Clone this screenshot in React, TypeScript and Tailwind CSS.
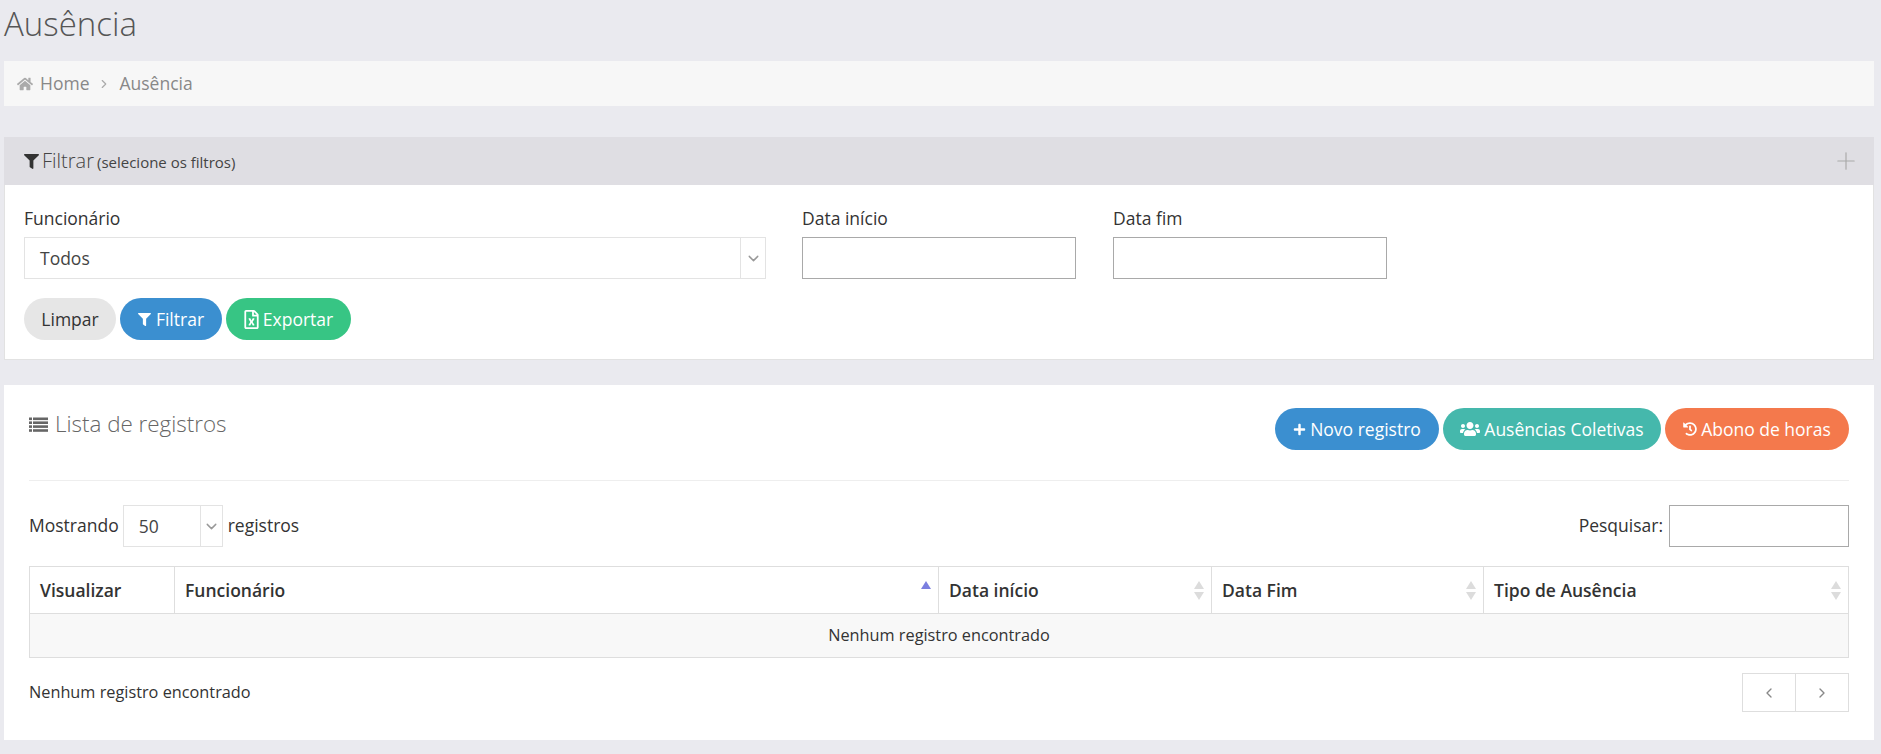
import { FaHome, FaFilter, FaPlus, FaUsers, FaHistory, FaRegFileExcel } from "react-icons/fa";
import { LuChevronDown, LuChevronLeft, LuChevronRight, LuPlus } from "react-icons/lu";

const ListIcon = () => (
  <svg className="mr-[7px]" width="19" height="15" viewBox="0 0 19 15" fill="#666">
    <rect x="0" y="0.5" width="3" height="2.6" />
    <rect x="4" y="0.5" width="15" height="2.6" />
    <rect x="0" y="4.4" width="3" height="2.6" />
    <rect x="4" y="4.4" width="15" height="2.6" />
    <rect x="0" y="8.3" width="3" height="2.6" />
    <rect x="4" y="8.3" width="15" height="2.6" />
    <rect x="0" y="12.2" width="3" height="2.6" />
    <rect x="4" y="12.2" width="15" height="2.6" />
  </svg>
);

const SortIcon = ({ active }: { active?: boolean }) => (
  <svg className="absolute right-[6px] top-[14px]" width="12" height="20" viewBox="0 0 12 20">
    <path d="M6 0 L11 8 H1 Z" fill={active ? "#7b7fe0" : "#dcdcdc"} />
    {!active && <path d="M1 11 H11 L6 19 Z" fill="#dcdcdc" />}
  </svg>
);

const Pill = ({ className, children }: { className: string; children: React.ReactNode }) => (
  <button className={`flex items-center h-[42px] rounded-[21px] text-[17.5px] ${className}`}>{children}</button>
);

const Select = ({ value, className, arrow }: { value: string; className: string; arrow: string }) => (
  <div className={`flex h-[42px] border border-[#e3e3e3] bg-white text-[17.5px] text-[#444] ${className}`}>
    <div className="flex-1 flex items-center pl-[15px]">{value}</div>
    <div className={`flex items-center justify-center border-l border-[#e3e3e3] ${arrow}`}>
      <LuChevronDown className="text-[#999] w-[17px] h-[17px]" />
    </div>
  </div>
);

const Th = ({ label, className, sort, active }: { label: string; className?: string; sort?: boolean; active?: boolean }) => (
  <th className={`relative border border-[#dedede] text-left font-semibold pl-[10px] text-[17.5px] text-[#333] ${className ?? ""}`}>
    {label}
    {sort && <SortIcon active={active} />}
  </th>
);

export default function App() {
  return (
    <div className="min-h-screen bg-[#eaeaef] px-[4px] pr-[7px] pb-[14px] font-['Open_Sans',sans-serif] text-[#333]">
      <h1 className="h-[61px] text-[33px] leading-[48px] font-light text-[#555]">Ausência</h1>

      <div className="flex items-center h-[45px] bg-[#f7f7f7] px-[13px] text-[17.5px] text-[#888]">
        <FaHome className="w-[16px] h-[16px] text-[#aaa] mr-[7px]" />
        <span>Home</span>
        <LuChevronRight className="w-[14px] h-[14px] mx-[8px] text-[#aaa]" />
        <span>Ausência</span>
      </div>

      <section className="mt-[31px] h-[223px] bg-white border border-t-0 border-[#e2e2e2]">
        <div className="flex items-center h-[48px] -mx-px bg-[#dfdee3] pl-[20px] pr-[14px] text-[#444]">
          <FaFilter className="w-[15px] h-[15px] mr-[3px] text-[#333]" />
          <span className="text-[20px] font-light">Filtrar</span>
          <span className="text-[15px] ml-[3px] mt-[2px] text-[#444]">(selecione os filtros)</span>
          <LuPlus className="ml-auto w-[28px] h-[28px] text-[#aaa]" strokeWidth={1} />
        </div>

        <div className="px-[19px] pt-[21px]">
          <div className="flex gap-[36px]">
            <div className="w-[742px]">
              <label className="block h-[31px] text-[17.5px] leading-[24px]">Funcionário</label>
              <Select value="Todos" className="w-full" arrow="w-[25px]" />
            </div>
            <div className="flex gap-[37px]">
              <div className="w-[274px]">
                <label className="block h-[31px] text-[17.5px] leading-[24px]">Data início</label>
                <input className="block w-full h-[42px] border border-[#a9a9a9] bg-white" />
              </div>
              <div className="w-[274px]">
                <label className="block h-[31px] text-[17.5px] leading-[24px]">Data fim</label>
                <input className="block w-full h-[42px] border border-[#a9a9a9] bg-white" />
              </div>
            </div>
          </div>
          <div className="flex gap-[4px] mt-[19px]">
            <Pill className="w-[92px] justify-center bg-[#e6e6e6] text-[#333]">Limpar</Pill>
            <Pill className="w-[102px] justify-center gap-[5px] bg-[#3b8fd0] text-white">
              <FaFilter className="w-[13px] h-[13px]" />
              Filtrar
            </Pill>
            <Pill className="w-[125px] justify-center gap-[4px] bg-[#37c584] text-white">
              <FaRegFileExcel className="w-[15px] h-[19px]" />
              Exportar
            </Pill>
          </div>
        </div>
      </section>

      <section className="mt-[25px] h-[355px] bg-white px-[25px] pt-[23px]">
        <div className="flex items-start justify-between h-[73px] border-b border-[#eeeeee]">
          <div className="flex items-center h-[32px] text-[#666]">
            <ListIcon />
            <span className="text-[22.4px] font-light">Lista de registros</span>
          </div>
          <div className="flex gap-[4px]">
            <Pill className="w-[164px] justify-center gap-[4px] bg-[#3b8fd0] text-white">
              <FaPlus className="w-[13px] h-[13px]" />
              Novo registro
            </Pill>
            <Pill className="w-[218px] justify-center gap-[4px] bg-[#45b8ac] text-white">
              <FaUsers className="w-[20px] h-[18px]" />
              Ausências Coletivas
            </Pill>
            <Pill className="w-[184px] justify-center gap-[4px] bg-[#f4794c] text-white">
              <FaHistory className="w-[14px] h-[14px]" />
              Abono de horas
            </Pill>
          </div>
        </div>

        <div className="flex items-center justify-between h-[42px] mt-[24px] text-[17.5px]">
          <div className="flex items-center">
            <span className="pb-[2px]">Mostrando</span>
            <Select value="50" className="w-[100px] ml-[4px] mr-[5px]" arrow="w-[22px]" />
            <span className="pb-[2px]">registros</span>
          </div>
          <div className="flex items-center">
            <span className="pb-[2px]">Pesquisar:</span>
            <input className="block w-[180px] h-[42px] ml-[6px] border border-[#a9a9a9] bg-white" />
          </div>
        </div>

        <table className="w-full mt-[19px] table-fixed border-collapse text-[16.3px]">
          <thead>
            <tr className="h-[47px]">
              <Th label="Visualizar" className="w-[145px]" />
              <Th label="Funcionário" className="w-[764px]" sort active />
              <Th label="Data início" className="w-[273px]" sort />
              <Th label="Data Fim" className="w-[272px]" sort />
              <Th label="Tipo de Ausência" sort />
            </tr>
          </thead>
          <tbody>
            <tr className="h-[44px] bg-[#f8f8f8]">
              <td colSpan={5} className="border border-[#dedede] text-center">Nenhum registro encontrado</td>
            </tr>
          </tbody>
        </table>

        <div className="flex items-center justify-between mt-[15px]">
          <span className="text-[16.3px]">Nenhum registro encontrado</span>
          <div className="flex h-[39px] border border-[#dedede] text-[#888]">
            <button className="flex items-center justify-center w-[53px] border-r border-[#dedede]">
              <LuChevronLeft className="w-[16px] h-[16px]" />
            </button>
            <button className="flex items-center justify-center w-[52px]">
              <LuChevronRight className="w-[16px] h-[16px]" />
            </button>
          </div>
        </div>
      </section>
    </div>
  );
}
